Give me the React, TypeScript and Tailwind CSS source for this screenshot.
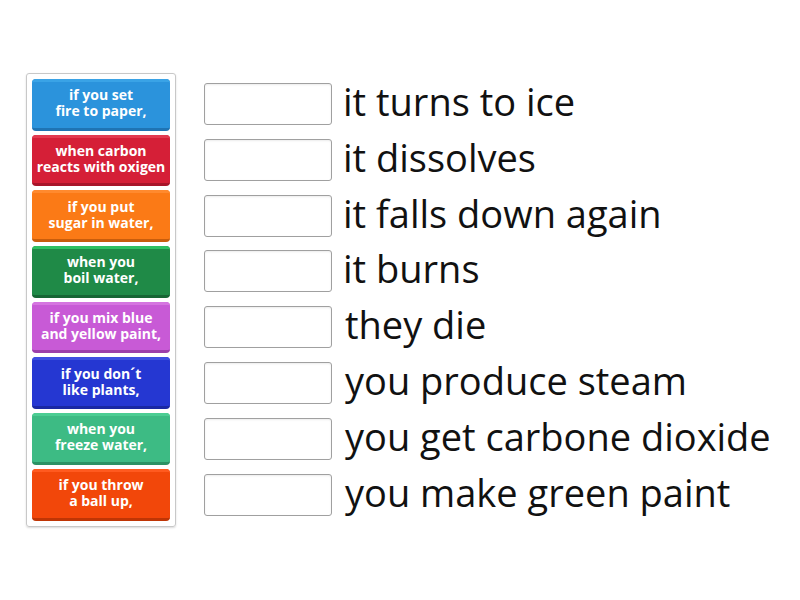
import React from 'react';

const tiles = [
  { text: ['if you set', 'fire to paper,'], top: 'bg-[#3aa3e6]', body: 'bg-[#2b93dc]', bottom: 'border-[#1f74b4]' },
  { text: ['when carbon', 'reacts with oxigen'], top: 'bg-[#e23a50]', body: 'bg-[#d51f37]', bottom: 'border-[#a8152a]' },
  { text: ['if you put', 'sugar in water,'], top: 'bg-[#ff8a2e]', body: 'bg-[#fb7a16]', bottom: 'border-[#c85d0c]' },
  { text: ['when you', 'boil water,'], top: 'bg-[#2ec061]', body: 'bg-[#1f8a47]', bottom: 'border-[#166634]' },
  { text: ['if you mix blue', 'and yellow paint,'], top: 'bg-[#d575e0]', body: 'bg-[#c85ad6]', bottom: 'border-[#9c3fab]' },
  { text: ['if you don´t', 'like plants,'], top: 'bg-[#3d4fe0]', body: 'bg-[#2537d2]', bottom: 'border-[#1a28a3]' },
  { text: ['when you', 'freeze water,'], top: 'bg-[#4ccd93]', body: 'bg-[#3dbb84]', bottom: 'border-[#2b9264]' },
  { text: ['if you throw', 'a ball up,'], top: 'bg-[#ff5a1f]', body: 'bg-[#f2470a]', bottom: 'border-[#bf3505]' },
];

const answers = [
  'it turns to ice',
  'it dissolves',
  'it falls down again',
  'it burns',
  'they die',
  'you produce steam',
  'you get carbone dioxide',
  'you make green paint',
];

export default function App() {
  return (
    <div
      className="w-[800px] h-[600px] bg-white relative"
      style={{ fontFamily: '"Open Sans", "Liberation Sans", sans-serif' }}
    >
      <div className="flex items-start pt-[73px] pl-[26px]">
        {/* Tile column */}
        <div className="w-[150px] border border-[#c8c8c8] rounded-[3px] p-[5px] flex flex-col gap-[4px] shadow-[0_1px_2px_rgba(0,0,0,0.15)]">
          {tiles.map((t, i) => (
            <div
              key={i}
              className={`h-[51.7px] rounded-[4px] border-b-[3px] ${t.bottom} ${t.body} relative overflow-hidden flex flex-col items-center justify-center`}
            >
              <div className={`absolute left-0 right-0 top-0 h-[3px] ${t.top}`}></div>
              <div className="relative text-white font-bold text-[14px] leading-[16px] text-center whitespace-nowrap">
                {t.text[0]}
              </div>
              <div className="relative text-white font-bold text-[14px] leading-[16px] text-center whitespace-nowrap">
                {t.text[1]}
              </div>
            </div>
          ))}
        </div>

        {/* Answers */}
        <div className="ml-[28px] pt-[10px] flex flex-col gap-[13.8px]">
          {answers.map((a, i) => (
            <div key={i} className="flex items-center h-[42px]">
              <div className="w-[128px] h-[42px] border border-[#a0a0a0] rounded-[3px] bg-white shadow-[inset_0_1px_2px_rgba(0,0,0,0.08)]"></div>
              <div
                className={`${i < 4 ? 'ml-[11px]' : 'ml-[13px]'} text-[38px] leading-[42px] text-[#111] whitespace-nowrap -mt-[6px]`}
              >
                {a}
              </div>
            </div>
          ))}
        </div>
      </div>
    </div>
  );
}
